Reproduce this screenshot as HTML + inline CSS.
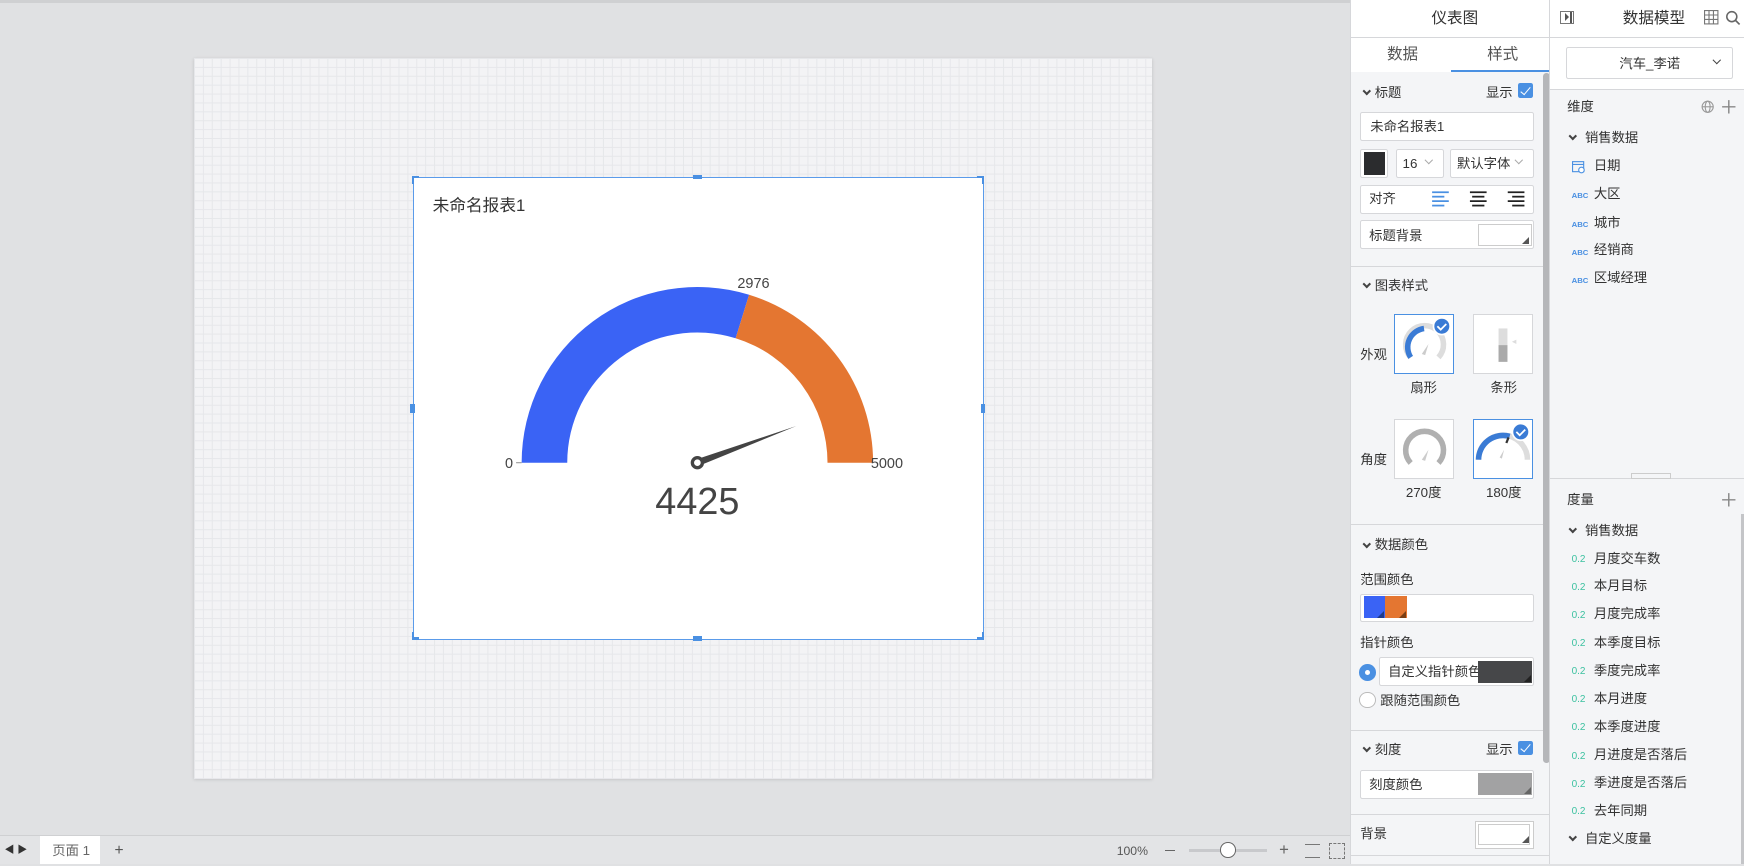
<!DOCTYPE html>
<html><head><meta charset="utf-8"><style>
*{box-sizing:border-box;margin:0;padding:0}
html,body{width:1744px;height:866px;overflow:hidden;background:#e0e1e3}
body{font-family:"Liberation Sans","Noto Sans CJK SC",sans-serif;color:#333}
#w{zoom:1.11224;position:relative;width:1568px;height:777px}
.a{position:absolute}
.t{position:absolute;font-size:12px;color:#333;white-space:nowrap;line-height:14px}
.grid{background-color:#f3f3f5;background-image:linear-gradient(#e6e7ea 1px,transparent 1px),linear-gradient(90deg,#e6e7ea 1px,transparent 1px);background-size:8px 8px}
.box{position:absolute;background:#fff;border:1px solid #d6d7da;border-radius:2px}
.hl{position:absolute;height:1px;background:#d6d7da}
.chev{display:inline-block;width:5px;height:5px;border-right:2px solid #444;border-bottom:2px solid #444;transform:rotate(45deg);position:absolute}
.cb{position:absolute;width:13px;height:13px;background:#4a90e2;border-radius:2px}
.cb:after{content:"";position:absolute;left:4px;top:1px;width:4px;height:8px;border-right:1.5px solid #fff;border-bottom:1.5px solid #fff;transform:rotate(40deg)}
.abc{position:absolute;font-size:7px;color:#4a90e2;font-weight:bold}
.num{position:absolute;font-size:9px;color:#3cc1a0}
.tri{position:absolute;width:0;height:0;border-left:7px solid transparent;border-bottom:7px solid #555}
</style></head><body><div id="w">
<div class="a" style="left:0;top:0;width:1214px;height:3px;background:#cfd0d2"></div>
<div class="a grid" style="left:174px;top:52px;width:862px;height:648px;box-shadow:0 1px 3px rgba(0,0,0,.15)"></div>
<div class="a" style="left:371px;top:159px;width:514px;height:416px;background:#fff;border:1px solid #5a9bea"></div>
<div class="a" style="left:370px;top:158px;width:7px;height:2px;background:#4a90e2"></div>
<div class="a" style="left:370px;top:158px;width:2px;height:7px;background:#4a90e2"></div>
<div class="a" style="left:878px;top:158px;width:7px;height:2px;background:#4a90e2"></div>
<div class="a" style="left:883px;top:158px;width:2px;height:7px;background:#4a90e2"></div>
<div class="a" style="left:370px;top:573px;width:7px;height:2px;background:#4a90e2"></div>
<div class="a" style="left:370px;top:568px;width:2px;height:7px;background:#4a90e2"></div>
<div class="a" style="left:878px;top:573px;width:7px;height:2px;background:#4a90e2"></div>
<div class="a" style="left:883px;top:568px;width:2px;height:7px;background:#4a90e2"></div>
<div class="a" style="left:623px;top:157px;width:8px;height:4px;background:#4a90e2"></div>
<div class="a" style="left:623px;top:572px;width:8px;height:4px;background:#4a90e2"></div>
<div class="a" style="left:369px;top:363px;width:4px;height:8px;background:#4a90e2"></div>
<div class="a" style="left:882px;top:363px;width:4px;height:8px;background:#4a90e2"></div>
<div class="t" style="left:389px;top:176px;font-size:15px;line-height:18px;color:#333">未命名报表1</div>
<svg class="a" style="left:0;top:0" width="1214" height="751">
<path d="M469,416 A158,158 0 0 1 673.5,265 L661.4,304.1 A117,117 0 0 0 510,416 Z" fill="#3a63f5"/>
<path d="M673.5,265 A158,158 0 0 1 785,416 L744,416 A117,117 0 0 0 661.4,304.1 Z" fill="#e47631"/>
<polygon points="628,419 626,413 716,383" fill="#444"/>
<circle cx="627" cy="416" r="4.5" fill="#fff" stroke="#444" stroke-width="3"/>
<line x1="464" y1="416" x2="469" y2="416" stroke="#999"/>
<text x="454" y="421" font-size="13" fill="#444" font-family="Liberation Sans">0</text>
<text x="783" y="421" font-size="13" fill="#444" font-family="Liberation Sans">5000</text>
<text x="663" y="259" font-size="13" fill="#444" font-family="Liberation Sans">2976</text>
<text x="627" y="462" font-size="34" fill="#444" text-anchor="middle" font-family="Liberation Sans">4425</text>
</svg>
<div class="a" style="left:0;top:751px;width:1214px;height:26px;background:#e3e4e6;border-top:1px solid #cfd0d2"></div>
<div class="t" style="left:4px;top:758px;font-size:9px">◀ ▶</div>
<div class="a" style="left:36px;top:752px;width:54px;height:25px;background:#fff"></div>
<div class="t" style="left:47px;top:758px;color:#666">页面 1</div>
<div class="t" style="left:103px;top:758px;font-size:14px;color:#555">+</div>
<div class="t" style="left:1004px;top:759px;font-size:11px;color:#555">100%</div>
<div class="a" style="left:1047px;top:764px;width:9px;height:1.5px;background:#666"></div>
<div class="a" style="left:1069px;top:763px;width:70px;height:3px;background:#c8c9cc"></div>
<div class="a" style="left:1097px;top:757px;width:14px;height:14px;border-radius:50%;background:#fff;border:1.5px solid #666"></div>
<div class="t" style="left:1150px;top:757px;font-size:15px;color:#666">+</div>
<div class="a" style="left:1173px;top:759px;width:14px;height:12px;border:1.5px solid #777;border-left:none;border-right:none"></div>
<div class="a" style="left:1195px;top:758px;width:14px;height:14px;border:1.5px dashed #777"></div>
<div class="a" style="left:1214px;top:0;width:180px;height:777px;background:#f4f5f7;border-left:1px solid #d6d7da"></div>
<div class="a" style="left:1214px;top:0;width:180px;height:65px;background:#fff;border-left:1px solid #d6d7da"></div>
<div class="hl" style="left:1214px;top:33px;width:180px"></div>
<div class="t" style="left:1287px;top:9px;font-size:14px;line-height:16px">仪表图</div>
<div class="t" style="left:1247px;top:41px;font-size:14px;line-height:16px;color:#555">数据</div>
<div class="t" style="left:1337px;top:41px;font-size:14px;line-height:16px;color:#555">样式</div>
<div class="a" style="left:1305px;top:63px;width:89px;height:2px;background:#4a90e2"></div>
<div class="a" style="left:1387px;top:66px;width:7px;height:620px;background:#b5b6b9;border-radius:3px"></div>
<div class="a" style="left:1393px;top:0;width:1px;height:777px;background:#d6d7da"></div>
<span class="chev" style="left:1226px;top:79px"></span>
<div class="t" style="left:1236px;top:76px">标题</div>
<div class="t" style="left:1336px;top:76px">显示</div>
<div class="cb" style="left:1365px;top:75px"></div>
<div class="box" style="left:1223px;top:101px;width:156px;height:26px"></div>
<div class="t" style="left:1232px;top:107px">未命名报表1</div>
<div class="box" style="left:1223px;top:134px;width:25px;height:26px"></div>
<div class="a" style="left:1226px;top:137px;width:19px;height:20px;background:#2b2c2e"></div>
<div class="box" style="left:1255px;top:134px;width:43px;height:26px"></div>
<div class="t" style="left:1261px;top:140px">16</div>
<span class="chev" style="left:1282px;top:141px;border-color:#aaa;border-width:1px"></span>
<div class="box" style="left:1304px;top:134px;width:75px;height:26px"></div>
<div class="t" style="left:1310px;top:140px">默认字体</div>
<span class="chev" style="left:1363px;top:141px;border-color:#aaa;border-width:1px"></span>
<div class="box" style="left:1223px;top:166px;width:156px;height:26px"></div>
<div class="t" style="left:1231px;top:172px">对齐</div>
<svg class="a" style="left:1287px;top:171px" width="90" height="16">
<g stroke="#4a90e2" stroke-width="1.6"><line x1="1" y1="2" x2="16" y2="2"/><line x1="1" y1="6" x2="12" y2="6"/><line x1="1" y1="10" x2="16" y2="10"/><line x1="1" y1="14" x2="12" y2="14"/></g>
<g stroke="#222" stroke-width="1.6"><line x1="35" y1="2" x2="50" y2="2"/><line x1="37" y1="6" x2="48" y2="6"/><line x1="35" y1="10" x2="50" y2="10"/><line x1="37" y1="14" x2="48" y2="14"/>
<line x1="69" y1="2" x2="84" y2="2"/><line x1="73" y1="6" x2="84" y2="6"/><line x1="69" y1="10" x2="84" y2="10"/><line x1="73" y1="14" x2="84" y2="14"/></g></svg>
<div class="box" style="left:1223px;top:198px;width:156px;height:26px"></div>
<div class="t" style="left:1231px;top:205px">标题背景</div>
<div class="a" style="left:1329px;top:201px;width:48px;height:20px;background:#fff;border:1px solid #ccc"></div>
<div class="tri" style="left:1368px;top:213px"></div>
<div class="hl" style="left:1214px;top:239px;width:173px"></div>
<span class="chev" style="left:1226px;top:253px"></span>
<div class="t" style="left:1236px;top:250px">图表样式</div>
<div class="t" style="left:1223px;top:312px">外观</div>
<div class="t" style="left:1223px;top:406px">角度</div>
<div class="a" style="left:1253px;top:282px;width:54px;height:54px;background:#fff;border:1.5px solid #4a90e2"></div>
<div class="a" style="left:1324px;top:282px;width:54px;height:54px;background:#fff;border:1px solid #d6d7da"></div>
<div class="a" style="left:1253px;top:377px;width:54px;height:54px;background:#fff;border:1px solid #d6d7da"></div>
<div class="a" style="left:1324px;top:377px;width:54px;height:54px;background:#fff;border:1.5px solid #4a90e2"></div>
<svg class="a" style="left:1253px;top:282px" width="130" height="150">
<path d="M15,39 A17,17 0 1 1 40,39" fill="none" stroke="#ddd" stroke-width="5"/>
<path d="M15,39 A17,17 0 0 1 27,13" fill="none" stroke="#3a7bd5" stroke-width="5"/>
<path d="M28,37 L31,27 L25,36Z" fill="#ccc"/>
<rect x="94" y="13" width="8" height="30" fill="#ddd"/><rect x="94" y="28" width="8" height="15" fill="#aaa"/>
<path d="M110,23 L106,25 L110,27Z" fill="#ddd"/>
<path d="M15,134 A17,17 0 1 1 40,134" fill="none" stroke="#b0b0b0" stroke-width="5"/>
<path d="M28,132 L31,122 L25,131Z" fill="#ccc"/>
<path d="M76,131 A22,22 0 0 1 120,131" fill="none" stroke="#ddd" stroke-width="5"/>
<path d="M76,131 A22,22 0 0 1 104,110" fill="none" stroke="#3a7bd5" stroke-width="5"/>
<line x1="103" y1="111" x2="101" y2="116" stroke="#333" stroke-width="2"/>
<path d="M97,130 L99,122 L95,129Z" fill="#ccc"/>
<line x1="45" y1="13" x2="44" y2="16" stroke="#333" stroke-width="2"/>
<circle cx="43" cy="11" r="7.5" fill="#3a7bd5" stroke="#fff" stroke-width="1.5"/><path d="M39,11 l3,3 l5,-5" fill="none" stroke="#fff" stroke-width="1.6"/>
<circle cx="114" cy="106" r="7.5" fill="#3a7bd5" stroke="#fff" stroke-width="1.5"/><path d="M110,106 l3,3 l5,-5" fill="none" stroke="#fff" stroke-width="1.6"/>
</svg>
<div class="t" style="left:1268px;top:342px">扇形</div>
<div class="t" style="left:1340px;top:342px">条形</div>
<div class="t" style="left:1264px;top:436px">270度</div>
<div class="t" style="left:1336px;top:436px">180度</div>
<div class="hl" style="left:1214px;top:471px;width:173px"></div>
<span class="chev" style="left:1226px;top:486px"></span>
<div class="t" style="left:1236px;top:483px">数据颜色</div>
<div class="t" style="left:1223px;top:514px">范围颜色</div>
<div class="box" style="left:1223px;top:534px;width:156px;height:25px"></div>
<div class="a" style="left:1226px;top:536px;width:19px;height:20px;background:#3a63f5"></div>
<div class="a" style="left:1245px;top:536px;width:20px;height:20px;background:#e47631"></div>
<div class="tri" style="left:1238px;top:549px;border-bottom-color:#1e3a8a"></div>
<div class="tri" style="left:1258px;top:549px;border-bottom-color:#7a3e14"></div>
<div class="t" style="left:1223px;top:571px">指针颜色</div>
<div class="a" style="left:1222px;top:597px;width:15px;height:15px;border-radius:50%;background:#4a90e2"></div>
<div class="a" style="left:1227px;top:602px;width:5px;height:5px;border-radius:50%;background:#fff"></div>
<div class="box" style="left:1240px;top:591px;width:139px;height:26px"></div>
<div class="t" style="left:1248px;top:597px">自定义指针颜色</div>
<div class="a" style="left:1329px;top:594px;width:48px;height:20px;background:#464749"></div>
<div class="tri" style="left:1370px;top:607px;border-bottom-color:#222"></div>
<div class="a" style="left:1222px;top:622px;width:15px;height:15px;border-radius:50%;background:#fff;border:1px solid #bbb"></div>
<div class="t" style="left:1241px;top:623px">跟随范围颜色</div>
<div class="hl" style="left:1214px;top:656px;width:173px"></div>
<span class="chev" style="left:1226px;top:670px"></span>
<div class="t" style="left:1236px;top:667px">刻度</div>
<div class="t" style="left:1336px;top:667px">显示</div>
<div class="cb" style="left:1365px;top:666px"></div>
<div class="box" style="left:1223px;top:692px;width:156px;height:26px"></div>
<div class="t" style="left:1231px;top:699px">刻度颜色</div>
<div class="a" style="left:1329px;top:695px;width:48px;height:20px;background:#a2a2a3"></div>
<div class="tri" style="left:1370px;top:708px;border-bottom-color:#666"></div>
<div class="hl" style="left:1214px;top:732px;width:180px"></div>
<div class="t" style="left:1223px;top:743px">背景</div>
<div class="a" style="left:1326px;top:738px;width:53px;height:25px;background:#fff;border:1px solid #ccc"></div>
<div class="a" style="left:1329px;top:741px;width:47px;height:19px;border:1px solid #ccc"></div>
<div class="tri" style="left:1368px;top:752px"></div>
<div class="hl" style="left:1214px;top:769px;width:180px"></div>
<div class="a" style="left:1394px;top:0;width:174px;height:777px;background:#f4f5f7"></div>
<div class="a" style="left:1394px;top:0;width:174px;height:33px;background:#fff"></div>
<div class="hl" style="left:1394px;top:33px;width:174px"></div>
<div class="a" style="left:1403px;top:10px;width:12px;height:12px;border:1px solid #777"></div>
<div class="a" style="left:1407px;top:12px;width:0;height:0;border-left:4px solid #555;border-top:4px solid transparent;border-bottom:4px solid transparent"></div>
<div class="a" style="left:1412px;top:11px;width:1px;height:10px;background:#555"></div>
<div class="t" style="left:1459px;top:9px;font-size:14px;line-height:16px">数据模型</div>
<svg class="a" style="left:1532px;top:9px" width="34" height="14"><rect x="0.5" y="0.5" width="12" height="12" fill="none" stroke="#777"/><path d="M0.5,4.5H12.5M0.5,8.5H12.5M4.5,0.5V12.5M8.5,0.5V12.5" stroke="#777"/><circle cx="25" cy="6" r="4.5" fill="none" stroke="#666" stroke-width="1.4"/><line x1="28" y1="9" x2="32" y2="13" stroke="#666" stroke-width="1.5"/></svg>
<div class="a" style="left:1394px;top:34px;width:174px;height:46px;background:#fff"></div>
<div class="box" style="left:1408px;top:42px;width:150px;height:29px"></div>
<div class="t" style="left:1456px;top:50px">汽车_李诺</div>
<span class="chev" style="left:1541px;top:51px;border-width:1.5px"></span>
<div class="hl" style="left:1394px;top:80px;width:174px"></div>
<div class="t" style="left:1409px;top:89px">维度</div>
<svg class="a" style="left:1529px;top:89px" width="34" height="14"><circle cx="6" cy="7" r="5" fill="none" stroke="#999"/><ellipse cx="6" cy="7" rx="2.2" ry="5" fill="none" stroke="#999"/><line x1="1" y1="7" x2="11" y2="7" stroke="#999"/><path d="M25,1V13M19,7H31" stroke="#888" stroke-width="1.3"/></svg>
<span class="chev" style="left:1412px;top:120px"></span>
<div class="t" style="left:1425px;top:117px">销售数据</div>
<svg class="a" style="left:1413px;top:144px" width="12" height="12"><rect x="0.5" y="1.5" width="10" height="9" fill="none" stroke="#4a90e2"/><line x1="0.5" y1="4" x2="10.5" y2="4" stroke="#4a90e2"/><circle cx="8.5" cy="9" r="2.5" fill="#fff" stroke="#4a90e2"/></svg>
<div class="t" style="left:1433px;top:142px">日期</div>
<div class="abc" style="left:1413px;top:172px">ABC</div><div class="t" style="left:1433px;top:167px">大区</div>
<div class="abc" style="left:1413px;top:198px">ABC</div><div class="t" style="left:1433px;top:193px">城市</div>
<div class="abc" style="left:1413px;top:223px">ABC</div><div class="t" style="left:1433px;top:218px">经销商</div>
<div class="abc" style="left:1413px;top:248px">ABC</div><div class="t" style="left:1433px;top:243px">区域经理</div>
<div class="hl" style="left:1394px;top:430px;width:174px"></div>
<div class="a" style="left:1466px;top:425px;width:36px;height:6px;border:1px solid #ccc;background:#f4f5f7"></div>
<div class="t" style="left:1409px;top:442px">度量</div>
<svg class="a" style="left:1547px;top:442px" width="14" height="14"><path d="M7,1V13M1,7H13" stroke="#888" stroke-width="1.3"/></svg>
<div class="a" style="left:1565px;top:462px;width:3px;height:315px;background:#c4c5c8"></div>
<span class="chev" style="left:1412px;top:473px"></span>
<div class="t" style="left:1425px;top:470px">销售数据</div>
<div class="num" style="left:1413px;top:498px">0.2</div><div class="t" style="left:1433px;top:495px">月度交车数</div>
<div class="num" style="left:1413px;top:523px">0.2</div><div class="t" style="left:1433px;top:520px">本月目标</div>
<div class="num" style="left:1413px;top:548px">0.2</div><div class="t" style="left:1433px;top:545px">月度完成率</div>
<div class="num" style="left:1413px;top:574px">0.2</div><div class="t" style="left:1433px;top:571px">本季度目标</div>
<div class="num" style="left:1413px;top:599px">0.2</div><div class="t" style="left:1433px;top:596px">季度完成率</div>
<div class="num" style="left:1413px;top:624px">0.2</div><div class="t" style="left:1433px;top:621px">本月进度</div>
<div class="num" style="left:1413px;top:649px">0.2</div><div class="t" style="left:1433px;top:646px">本季度进度</div>
<div class="num" style="left:1413px;top:675px">0.2</div><div class="t" style="left:1433px;top:672px">月进度是否落后</div>
<div class="num" style="left:1413px;top:700px">0.2</div><div class="t" style="left:1433px;top:697px">季进度是否落后</div>
<div class="num" style="left:1413px;top:725px">0.2</div><div class="t" style="left:1433px;top:722px">去年同期</div>
<span class="chev" style="left:1412px;top:750px"></span>
<div class="t" style="left:1425px;top:747px">自定义度量</div>
</div></body></html>
